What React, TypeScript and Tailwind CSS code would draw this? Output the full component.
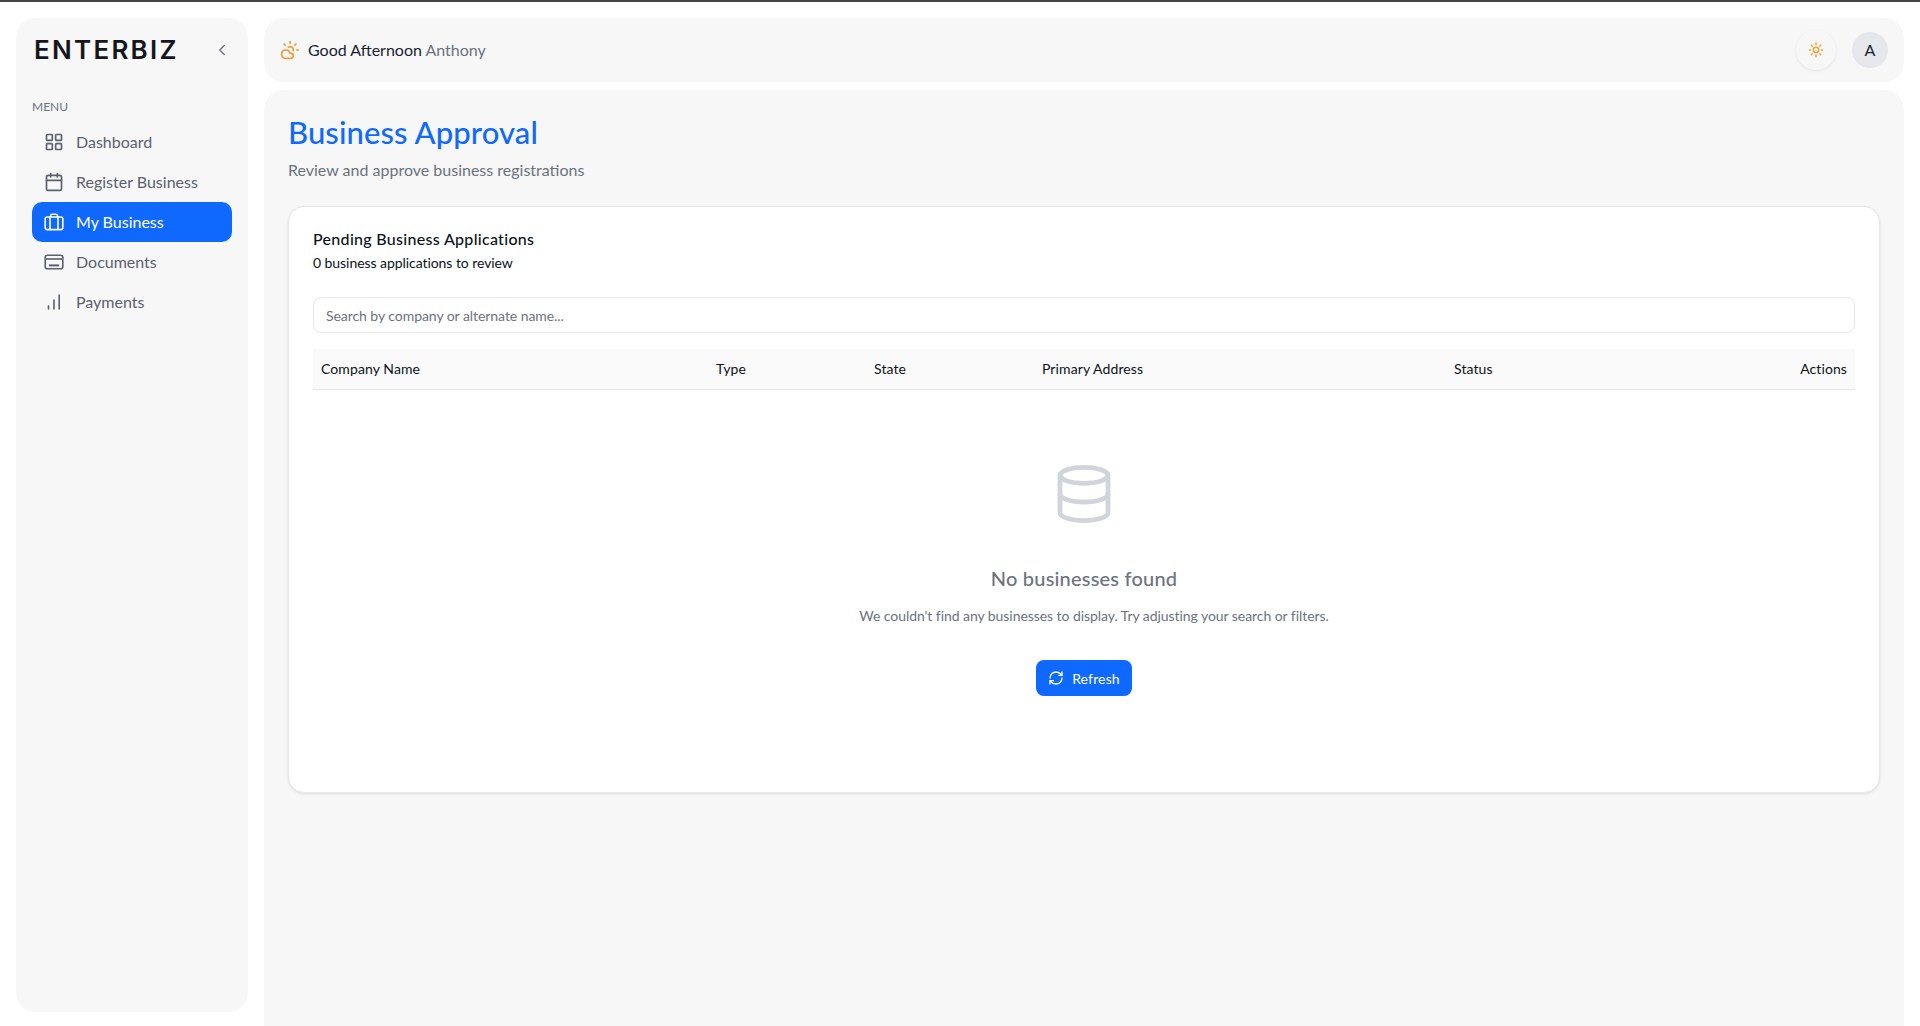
import { Calendar, ChevronLeft, CloudSun, Database, LayoutGrid, RefreshCw, Sun } from 'lucide-react';
import type { ReactNode } from 'react';

function BriefcaseIcon() {
  return (
    <svg width="20" height="20" viewBox="0 0 20 20" fill="none" stroke="currentColor" strokeWidth="1.6">
      <rect x="1.2" y="5" width="17.6" height="12.6" rx="2" />
      <path d="M6 5v12.6M14 5v12.6M6.6 5V3.8a1.6 1.6 0 0 1 1.6-1.6h3.6a1.6 1.6 0 0 1 1.6 1.6V5" />
    </svg>
  );
}

function DocumentsIcon() {
  return (
    <svg width="20" height="20" viewBox="0 0 20 20" fill="none" stroke="currentColor" strokeWidth="1.6">
      <rect x="1.2" y="3.2" width="17.6" height="13.6" rx="2" />
      <path d="M1.2 7h17.6" />
      <path d="M5 13.4h10" strokeWidth="2" />
    </svg>
  );
}

function BarsIcon() {
  return (
    <svg width="20" height="20" viewBox="0 0 20 20" fill="none" stroke="currentColor" strokeWidth="1.6" strokeLinecap="round">
      <path d="M4.5 17v-3M10 17V8M15.2 17V3" />
    </svg>
  );
}

const menu: { label: string; icon: ReactNode; active?: boolean }[] = [
  { label: 'Dashboard', icon: <LayoutGrid size={20} strokeWidth={2} /> },
  { label: 'Register Business', icon: <Calendar size={20} strokeWidth={2} /> },
  { label: 'My Business', icon: <BriefcaseIcon />, active: true },
  { label: 'Documents', icon: <DocumentsIcon /> },
  { label: 'Payments', icon: <BarsIcon /> },
];

function Sidebar() {
  return (
    <aside className="w-[232px] h-[994px] shrink-0 rounded-[20px] bg-[#f7f7f7] px-4">
      <div className="flex h-[64px] items-center justify-between pl-[2px] pr-[1px]">
        <span className="text-[26px] font-semibold leading-none tracking-[2.25px] text-[#14161c] font-['Inter',sans-serif]">ENTERBIZ</span>
        <ChevronLeft size={18} strokeWidth={1.8} className="text-[#6b7280]" />
      </div>
      <p className="mt-[17px] text-[12px] leading-[16px] text-[#6b7280]">MENU</p>
      <nav className="mt-[7px] flex flex-col">
        {menu.map((item) => (
          <a
            key={item.label}
            className={
              item.active
                ? 'flex h-[40px] items-center gap-[12px] rounded-[10px] bg-[#0f69ff] pl-[12px] text-[16px] text-white'
                : 'flex h-[40px] items-center gap-[12px] rounded-[10px] pl-[12px] text-[16px] text-[#5b6070]'
            }
          >
            <span className="flex w-[20px] justify-center">{item.icon}</span>
            {item.label}
          </a>
        ))}
      </nav>
    </aside>
  );
}

function Header() {
  return (
    <header className="flex h-[64px] items-center justify-between rounded-[20px] bg-[#f7f7f7] pl-[16px] pr-[16px]">
      <div className="flex items-center gap-[8px] text-[16px]">
        <CloudSun size={20} strokeWidth={2} className="text-[#f09a36]" />
        <span className="text-[#1b2333]">
          Good Afternoon <span className="text-[#6b7280]">Anthony</span>
        </span>
      </div>
      <div className="flex items-center gap-[16px]">
        <div className="flex h-[40px] w-[40px] items-center justify-center rounded-full bg-[#f7f7f7] shadow-[0_1px_3px_rgba(0,0,0,0.08)]">
          <Sun size={16} strokeWidth={2.2} className="text-[#f5a033]" />
        </div>
        <div className="flex h-[36px] w-[36px] items-center justify-center rounded-full bg-[#e5e7eb] text-[16px] text-[#1b2333]">A</div>
      </div>
    </header>
  );
}

function EmptyState() {
  return (
    <div className="flex flex-col items-center pt-[72px]">
      <Database size={64} strokeWidth={1.8} className="text-[#d1d5db]" />
      <h3 className="mt-[38px] text-[20px] font-medium leading-[28px] tracking-[0.2px] text-[#6b7280]">No businesses found</h3>
      <p className="mt-[14px] pl-[20px] text-[14px] leading-[20px] tracking-[-0.06px] text-[#6b7280]">
        We couldn't find any businesses to display. Try adjusting your search or filters.
      </p>
      <button className="mt-[34px] flex h-[36px] items-center gap-[8px] rounded-[8px] bg-[#0f69ff] px-[12.5px] text-[14px] tracking-[0.15px] text-white">
        <RefreshCw size={16} strokeWidth={2} />
        Refresh
      </button>
    </div>
  );
}

function PendingCard() {
  return (
    <section className="mt-[24px] h-[587px] rounded-[16px] border border-[#e5e7eb] bg-white px-[24px] pt-[20px] shadow-[0_1px_3px_rgba(0,0,0,0.1)]">
      <h2 className="text-[16px] font-medium leading-[24px] tracking-[0.3px] text-[#0b1220]">Pending Business Applications</h2>
      <p className="mt-[2px] text-[14px] leading-[20px] tracking-[-0.06px] text-[#0b1220]">0 business applications to review</p>
      <input
        placeholder="Search by company or alternate name..."
        className="mt-[24px] h-[36px] w-full rounded-[8px] border border-[#e5e7eb] bg-white px-[12px] text-[14px] tracking-[-0.06px] placeholder:text-[#6b7280] outline-none"
      />
      <div className="mt-[16px] grid h-[41px] grid-cols-[395px_158px_168px_412px_1fr_auto] items-center border-b border-[#e5e7eb] bg-[#fafafa] px-[8px] pb-[2px] text-[14px] tracking-[0.1px] text-[#0b1220]">
        <span>Company Name</span>
        <span>Type</span>
        <span>State</span>
        <span>Primary Address</span>
        <span>Status</span>
        <span>Actions</span>
      </div>
      <EmptyState />
    </section>
  );
}

export default function App() {
  return (
    <div className="h-[1026px] overflow-hidden bg-white font-['Lato',sans-serif]">
      <div className="h-[2px] bg-[#444444]" />
      <div className="flex gap-[16px] pl-[16px] pr-[16px] pt-[16px]">
        <Sidebar />
        <div className="flex min-w-0 flex-1 flex-col gap-[8px]">
          <Header />
          <main className="h-[936px] rounded-t-[20px] bg-[#f7f7f7] px-[24px] pt-[24px]">
            <h1 className="text-[31px] font-medium leading-[36px] tracking-[0.1px] text-[#0f69ff]">Business Approval</h1>
            <p className="mt-[8px] text-[16px] leading-[24px] text-[#6b7280]">Review and approve business registrations</p>
            <PendingCard />
          </main>
        </div>
      </div>
    </div>
  );
}
